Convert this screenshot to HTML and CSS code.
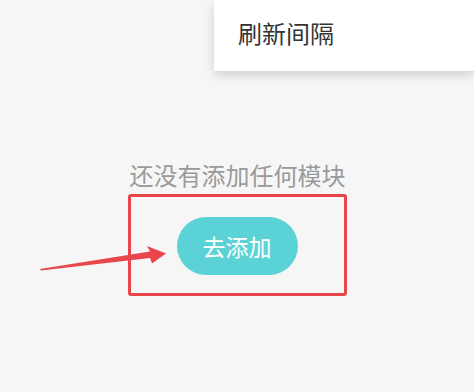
FILE: index.html
```html
<!DOCTYPE html>
<html lang="zh">
<head>
<meta charset="utf-8">
<link rel="stylesheet" href="styles.css">
</head>
<body>
<div class="page">
  <div class="empty">
    <div class="empty-text">还没有添加任何模块</div>
    <div class="highlight">
      <button class="add-btn">去添加</button>
    </div>
  </div>
  <div class="menu">
    <div class="menu-item">刷新间隔</div>
  </div>
  <svg class="arrow" width="474" height="392" viewBox="0 0 474 392">
    <polygon points="40,269 150,251.5 147,246 166,253.5 152,263.5 150,258 41,270.5" fill="#e8464a"/>
  </svg>
</div>
</body>
</html>
```
FILE: styles.css
```css
html, body {
  margin: 0;
  padding: 0;
  background: #f6f6f6;
}
.page {
  position: relative;
  width: 474px;
  height: 392px;
  overflow: hidden;
  font-family: "Noto Sans CJK SC", "Noto Sans", sans-serif;
}
.empty {
  display: flex;
  flex-direction: column;
  align-items: center;
  padding-top: 159px;
}
.empty-text {
  font-size: 24px;
  line-height: 32px;
  color: #9a9a9a;
  margin-left: 1px;
}
.highlight {
  box-sizing: border-box;
  width: 219px;
  height: 102px;
  margin-top: 3px;
  border: 3px solid #e8464a;
  border-radius: 3px;
  display: flex;
  align-items: center;
  justify-content: center;
}
.add-btn {
  width: 121px;
  height: 58px;
  border: none;
  border-radius: 29px;
  background: #5bd3d6;
  color: #ffffff;
  font-family: "Noto Sans CJK SC", "Noto Sans", sans-serif;
  font-size: 23px;
  padding: 0;
  margin-top: 1px;
}
.menu {
  position: absolute;
  top: 0;
  left: 214px;
  width: 260px;
  height: 71px;
  background: #ffffff;
  box-shadow: 0 4px 10px rgba(0, 0, 0, 0.16);
}
.menu-item {
  padding: 17px 0 0 24px;
  font-size: 24px;
  line-height: 32px;
  color: #333333;
}
.arrow {
  position: absolute;
  top: 0;
  left: 0;
}
```
